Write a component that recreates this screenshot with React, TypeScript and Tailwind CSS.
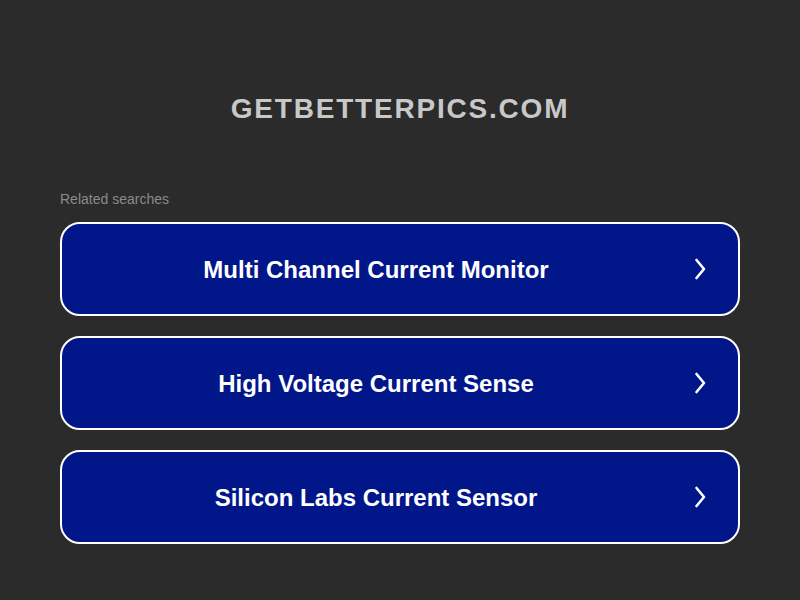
import React from 'react'

const searches = [
  'Multi Channel Current Monitor',
  'High Voltage Current Sense',
  'Silicon Labs Current Sensor',
]

function Chevron() {
  return (
    <svg width="14" height="22" viewBox="0 0 14 22" fill="none">
      <path d="M3.5 2 L11 11 L3.5 20" stroke="white" strokeWidth="2.6" strokeLinecap="round" strokeLinejoin="round" />
    </svg>
  )
}

export default function App() {
  return (
    <div className="min-h-[600px] w-full bg-[#2b2b2b] font-['Liberation_Sans',Arial,sans-serif]">
      <div className="pt-[93px] text-center">
        <h1 className="text-[28px] font-bold leading-[32px] tracking-[1.8px] text-[#c8c8c8]">GETBETTERPICS.COM</h1>
      </div>

      <div className="px-[60px] pt-[66px]">
        <p className="text-[14px] leading-[16px] text-[#8a8a8a]">Related searches</p>

        <div className="mt-[15px] flex flex-col gap-[20px]">
          {searches.map(label => (
            <div
              key={label}
              className="flex h-[94px] items-center rounded-[20px] border-2 border-white bg-[#011689] pl-[17px] pr-[31px]"
            >
              <span className="mt-[2px] flex-1 text-center text-[24px] font-bold leading-[28px] text-white">{label}</span>
              <span className="ml-[20px] flex w-[14px] justify-center">
                <Chevron />
              </span>
            </div>
          ))}
        </div>
      </div>
    </div>
  )
}
